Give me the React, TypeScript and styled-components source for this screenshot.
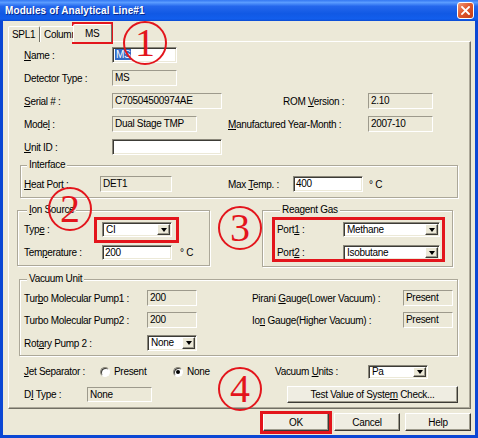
import React from 'react';
import styled, { createGlobalStyle } from 'styled-components';

const GlobalStyle = createGlobalStyle`
  html, body {
    margin: 0;
    padding: 0;
    background: #ffffff;
  }
  body {
    font-family: 'Liberation Sans', Arial, sans-serif;
    font-size: 10px;
    letter-spacing: -0.3px;
    color: #000;
  }
`;

const Window = styled.div`
  position: relative;
  width: 478px;
  height: 438px;
  box-sizing: border-box;
  padding: 0 3px 3px 3px;
  background: #0b47d4;
  display: flex;
  flex-direction: column;
  overflow: hidden;
`;

const TitleBar = styled.div`
  height: 21px;
  flex: none;
  margin: 0 -3px;
  padding: 0 4px 0 5px;
  display: flex;
  align-items: center;
  justify-content: space-between;
  background: linear-gradient(
    to bottom,
    #3478f2 0%,
    #5a9cff 12%,
    #2467ec 30%,
    #1159e4 65%,
    #125eec 90%,
    #0a4bd2 100%
  );
`;

const Title = styled.span`
  font-weight: bold;
  font-size: 10px;
  letter-spacing: 0.1px;
  color: #fff;
  text-shadow: 1px 1px 0 #0a2a8a;
`;

const CloseButton = styled.div`
  width: 17px;
  height: 17px;
  box-sizing: border-box;
  border: 1px solid #fff;
  border-radius: 3px;
  background: linear-gradient(135deg, #f09a7a 0%, #e0582e 45%, #c43d18 100%);
  display: flex;
  align-items: center;
  justify-content: center;
`;

const Client = styled.div`
  flex: 1;
  background: #ece9d8;
  padding: 3px 4px 0 5px;
  display: flex;
  flex-direction: column;
`;

const TabStrip = styled.div`
  display: flex;
  align-items: flex-end;
  height: 18px;
  margin-bottom: -1px;
`;

const Tab = styled.div<{ $active?: boolean; $w: number }>`
  position: relative;
  z-index: ${(p) => (p.$active ? 2 : 1)};
  box-sizing: border-box;
  width: ${(p) => p.$w}px;
  height: ${(p) => (p.$active ? 18 : 16)}px;
  margin-left: ${(p) => (p.$active ? -4 : 0)}px;
  padding: ${(p) => (p.$active ? '2px 0 0 11px' : '1px 0 0 3px')};
  line-height: 13px;
  white-space: nowrap;
  overflow: hidden;
  background: #ece9d8;
  border: 1px solid;
  border-bottom: none;
  border-color: #fff #716f64 transparent #fff;
  border-radius: 2px 2px 0 0;
`;

const TabPanel = styled.div`
  box-sizing: border-box;
  width: 463px;
  height: 368px;
  border: 1px solid;
  border-color: #fff #716f64 #716f64 #fff;
  box-shadow: inset -1px -1px 0 #aca899;
  display: flex;
  flex-direction: column;
`;

const Section = styled.div<{ $pl: number; $pt?: number }>`
  padding-left: ${(p) => p.$pl}px;
  padding-top: ${(p) => p.$pt ?? 0}px;
`;

const Row = styled.div<{ $mt?: number; $h?: number }>`
  display: flex;
  align-items: center;
  height: ${(p) => p.$h ?? 16}px;
  margin-top: ${(p) => p.$mt ?? 0}px;
`;

const Label = styled.span<{ $w: number; $ml?: number }>`
  flex: none;
  width: ${(p) => p.$w}px;
  margin-left: ${(p) => p.$ml ?? 0}px;
  white-space: nowrap;
`;

const Key = styled.span`
  text-decoration: underline;
`;

const ReadBox = styled.div<{ $w: number; $h?: number }>`
  flex: none;
  box-sizing: border-box;
  width: ${(p) => p.$w}px;
  height: ${(p) => p.$h ?? 16}px;
  border: 1px solid;
  border-color: #9d9a8c #fff #fff #9d9a8c;
  padding-left: 2px;
  line-height: ${(p) => (p.$h ?? 16) - 2}px;
  white-space: nowrap;
  overflow: hidden;
`;

const EditBox = styled.div<{ $w: number; $h?: number }>`
  flex: none;
  box-sizing: border-box;
  width: ${(p) => p.$w}px;
  height: ${(p) => p.$h ?? 16}px;
  background: #fff;
  border: 1px solid;
  border-color: #8a877a #fff #fff #8a877a;
  box-shadow: inset 1px 1px 0 #3c3b36, inset -1px -1px 0 #ece9d8;
  padding-left: 2px;
  line-height: ${(p) => (p.$h ?? 16) - 2}px;
  white-space: nowrap;
  overflow: hidden;
`;

const Combo = styled(EditBox)`
  display: flex;
  align-items: stretch;
  justify-content: space-between;
  padding-left: 0;
`;

const ComboText = styled.span`
  padding-left: 3px;
  display: flex;
  align-items: center;
`;

const DropButton = styled.span`
  flex: none;
  width: 13px;
  margin: 1px;
  box-sizing: border-box;
  background: #ece9d8;
  border: 1px solid;
  border-color: #fff #3c3b36 #3c3b36 #fff;
  box-shadow: inset -1px -1px 0 #9d9a8c;
  display: flex;
  align-items: center;
  justify-content: center;

  &::after {
    content: '';
    border-style: solid;
    border-width: 4px 3.5px 0 3.5px;
    border-color: #000 transparent transparent transparent;
  }
`;

const Selected = styled.span`
  background: #316ac5;
  color: #fff;
  padding: 0 1px;
`;

const Unit = styled.span<{ $ml: number }>`
  margin-left: ${(p) => p.$ml}px;
  white-space: nowrap;
`;

const Group = styled.fieldset<{ $ml: number; $mt?: number; $w: number; $pl: number; $pb?: number; $pt?: number }>`
  margin: ${(p) => p.$mt ?? 0}px 0 0 ${(p) => p.$ml}px;
  width: ${(p) => p.$w}px;
  box-sizing: border-box;
  min-width: 0;
  padding: ${(p) => p.$pt ?? 5}px 0 ${(p) => p.$pb ?? 5}px ${(p) => p.$pl}px;
  border: 1px solid #aca899;
  box-shadow: inset 1px 1px 0 #fff, 1px 1px 0 #fff;
`;

const Legend = styled.legend`
  margin-left: 3px;
  padding: 0 2px;
  line-height: 12px;
  background: #ece9d8;
`;

const GroupRow = styled.div`
  display: flex;
  align-items: flex-start;
  margin-top: 6px;
`;

const RadioItem = styled.label<{ $w: number }>`
  flex: none;
  width: ${(p) => p.$w}px;
  display: flex;
  align-items: center;
  gap: 4px;
  white-space: nowrap;
`;

const RadioDot = styled.span<{ $on?: boolean }>`
  width: 10px;
  height: 10px;
  box-sizing: border-box;
  border-radius: 50%;
  background: #fff;
  border: 1px solid;
  border-color: #8a877a #fff #fff #8a877a;
  box-shadow: inset 1px 1px 0 #3c3b36;
  display: flex;
  align-items: center;
  justify-content: center;

  &::after {
    content: '';
    display: ${(p) => (p.$on ? 'block' : 'none')};
    width: 4px;
    height: 4px;
    border-radius: 50%;
    background: #000;
  }
`;

const PushButton = styled.button<{ $w: number; $h: number; $ml?: number }>`
  flex: none;
  width: ${(p) => p.$w}px;
  height: ${(p) => p.$h}px;
  margin-left: ${(p) => p.$ml ?? 0}px;
  padding: 0;
  font: inherit;
  letter-spacing: inherit;
  color: #000;
  background: #efede2;
  border: 1px solid;
  border-color: #fff #3c3b36 #3c3b36 #fff;
  box-shadow: inset -1px -1px 0 #9d9a8c;
`;

const ButtonRow = styled.div`
  display: flex;
  justify-content: flex-end;
  gap: 5px;
  width: 463px;
  margin-top: 4px;
`;

const Highlight = styled.div<{ $x: number; $y: number; $w: number; $h: number }>`
  position: absolute;
  left: ${(p) => p.$x}px;
  top: ${(p) => p.$y}px;
  width: ${(p) => p.$w}px;
  height: ${(p) => p.$h}px;
  box-sizing: border-box;
  border: 3px solid #e3151c;
  pointer-events: none;
`;

const Marker = styled.div<{ $cx: number; $cy: number }>`
  position: absolute;
  left: ${(p) => p.$cx - 22}px;
  top: ${(p) => p.$cy - 22}px;
  width: 44px;
  height: 44px;
  box-sizing: border-box;
  border: 2px solid #e3151c;
  border-radius: 50%;
  display: flex;
  align-items: center;
  justify-content: center;
  font-family: 'Liberation Serif', 'Times New Roman', serif;
  font-size: 40px;
  letter-spacing: 0;
  line-height: 1;
  color: #e3151c;
  pointer-events: none;
`;

export default function App() {
  return (
    <>
      <GlobalStyle />
      <Window>
        <TitleBar>
          <Title>Modules of Analytical Line#1</Title>
          <CloseButton>
            <svg width="9" height="9" viewBox="0 0 9 9">
              <path d="M1 1 L8 8 M8 1 L1 8" stroke="#fff" strokeWidth="1.8" strokeLinecap="square" />
            </svg>
          </CloseButton>
        </TitleBar>

        <Client>
          <TabStrip>
            <Tab $w={32}>SPL1</Tab>
            <Tab $w={37}>Column</Tab>
            <Tab $w={39} $active>
              MS
            </Tab>
          </TabStrip>

          <TabPanel>
            <Section $pl={15} $pt={5}>
              <Row>
                <Label $w={88}>
                  <Key>N</Key>ame :
                </Label>
                <EditBox $w={65}>
                  <Selected>MS</Selected>
                </EditBox>
              </Row>
              <Row $mt={7}>
                <Label $w={88}>Detector Type :</Label>
                <ReadBox $w={65}>MS</ReadBox>
              </Row>
              <Row $mt={7}>
                <Label $w={88}>
                  <Key>S</Key>erial # :
                </Label>
                <ReadBox $w={110}>C70504500974AE</ReadBox>
                <Label $w={85} $ml={61}>
                  ROM <Key>V</Key>ersion :
                </Label>
                <ReadBox $w={65}>2.10</ReadBox>
              </Row>
              <Row $mt={7}>
                <Label $w={88}>
                  Mode<Key>l</Key> :
                </Label>
                <ReadBox $w={85}>Dual Stage TMP</ReadBox>
                <Label $w={140} $ml={31}>
                  <Key>M</Key>anufactured Year-Month :
                </Label>
                <ReadBox $w={65}>2007-10</ReadBox>
              </Row>
              <Row $mt={7}>
                <Label $w={88}>
                  <Key>U</Key>nit ID :
                </Label>
                <EditBox $w={110} />
              </Row>
            </Section>

            <Group $ml={11} $mt={4} $w={438} $pl={3}>
              <Legend>Interface</Legend>
              <Row>
                <Label $w={76}>
                  <Key>H</Key>eat Port :
                </Label>
                <ReadBox $w={72}>DET1</ReadBox>
                <Label $w={65} $ml={56}>
                  Max <Key>T</Key>emp. :
                </Label>
                <EditBox $w={70}>400</EditBox>
                <Unit $ml={6}>° C</Unit>
              </Row>
            </Group>

            <GroupRow>
              <Group $ml={8} $w={193} $pl={6} $pt={6}>
                <Legend>
                  <Key>I</Key>on Source
                </Legend>
                <Row $h={15}>
                  <Label $w={78}>
                    Typ<Key>e</Key> :
                  </Label>
                  <Combo $w={70} $h={15}>
                    <ComboText>CI</ComboText>
                    <DropButton />
                  </Combo>
                </Row>
                <Row $h={15} $mt={8}>
                  <Label $w={78}>
                    Tem<Key>p</Key>erature :
                  </Label>
                  <EditBox $w={70} $h={15}>
                    200
                  </EditBox>
                  <Unit $ml={8}>° C</Unit>
                </Row>
              </Group>

              <Group $ml={52} $w={191} $pl={14} $pt={6} $pb={6}>
                <Legend>Reagent Gas</Legend>
                <Row $h={15}>
                  <Label $w={66}>
                    Port<Key>1</Key> :
                  </Label>
                  <Combo $w={97} $h={15}>
                    <ComboText>Methane</ComboText>
                    <DropButton />
                  </Combo>
                </Row>
                <Row $h={15} $mt={8}>
                  <Label $w={66}>
                    Port<Key>2</Key> :
                  </Label>
                  <Combo $w={97} $h={15}>
                    <ComboText>Isobutane</ComboText>
                    <DropButton />
                  </Combo>
                </Row>
              </Group>
            </GroupRow>

            <Group $ml={10} $mt={6} $w={439} $pl={4} $pb={4}>
              <Legend>Vacuum Unit</Legend>
              <Row>
                <Label $w={123}>
                  Tur<Key>b</Key>o Molecular Pump1 :
                </Label>
                <ReadBox $w={50}>200</ReadBox>
                <Label $w={151} $ml={55}>
                  Pirani <Key>G</Key>auge(Lower Vacuum) :
                </Label>
                <ReadBox $w={50}>Present</ReadBox>
              </Row>
              <Row $mt={6}>
                <Label $w={123}>Turbo Molecular Pump2 :</Label>
                <ReadBox $w={50}>200</ReadBox>
                <Label $w={151} $ml={55}>
                  Io<Key>n</Key> Gauge(Higher Vacuum) :
                </Label>
                <ReadBox $w={50}>Present</ReadBox>
              </Row>
              <Row $mt={7}>
                <Label $w={123}>
                  Rot<Key>a</Key>ry Pump 2 :
                </Label>
                <Combo $w={50}>
                  <ComboText>None</ComboText>
                  <DropButton />
                </Combo>
              </Row>
            </Group>

            <Section $pl={15}>
              <Row $mt={8} $h={15}>
                <Label $w={76}>
                  <Key>J</Key>et Separator :
                </Label>
                <RadioItem $w={73}>
                  <RadioDot />
                  Present
                </RadioItem>
                <RadioItem $w={102}>
                  <RadioDot $on />
                  None
                </RadioItem>
                <Label $w={93}>
                  Vacuum <Key>U</Key>nits :
                </Label>
                <Combo $w={60} $h={14}>
                  <ComboText>Pa</ComboText>
                  <DropButton />
                </Combo>
              </Row>
              <Row $mt={7} $h={17}>
                <Label $w={63}>
                  D<Key>I</Key> Type :
                </Label>
                <ReadBox $w={65} $h={15}>
                  None
                </ReadBox>
                <PushButton $w={171} $h={17} $ml={135}>
                  Test Value of Syste<Key>m</Key> Check...
                </PushButton>
              </Row>
            </Section>
          </TabPanel>

          <ButtonRow>
            <PushButton $w={66} $h={18}>
              OK
            </PushButton>
            <PushButton $w={66} $h={18}>
              Cancel
            </PushButton>
            <PushButton $w={66} $h={18}>
              Help
            </PushButton>
          </ButtonRow>
        </Client>

        <Highlight $x={72} $y={22} $w={41} $h={22} />
        <Highlight $x={94} $y={217} $w={85} $h={26} />
        <Highlight $x={272} $y={217} $w={173} $h={45} />
        <Highlight $x={260} $y={411} $w={72} $h={23} />

        <Marker $cx={145} $cy={43}>1</Marker>
        <Marker $cx={70} $cy={209}>2</Marker>
        <Marker $cx={240} $cy={228}>3</Marker>
        <Marker $cx={240} $cy={389}>4</Marker>
      </Window>
    </>
  );
}
